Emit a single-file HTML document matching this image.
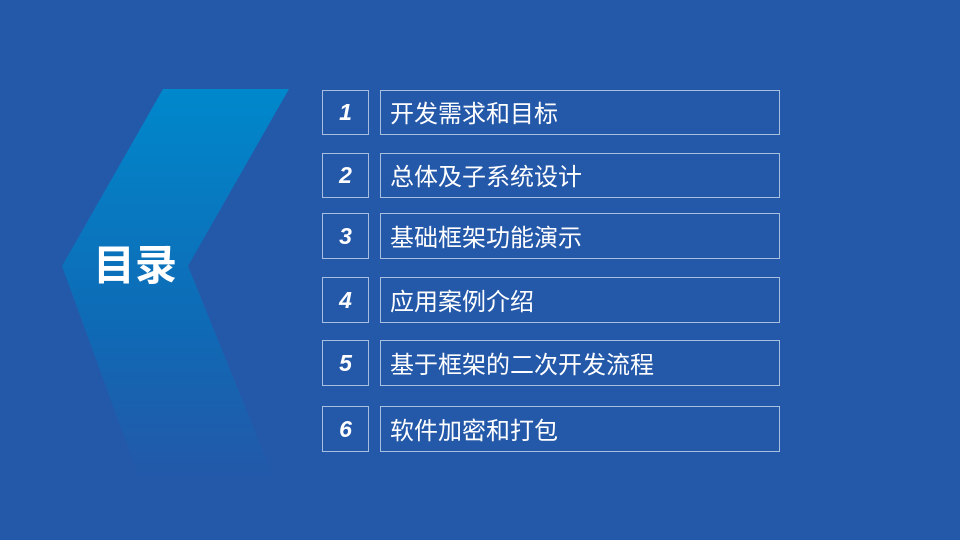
<!DOCTYPE html><html><head><meta charset="utf-8"><style>
body{margin:0;width:960px;height:540px;background:#2458a9;position:relative;overflow:hidden;font-family:"Liberation Sans","Noto Sans CJK SC",sans-serif}
.n,.t{position:absolute;border:1px solid #a9bfe0;box-sizing:border-box;color:#fff;display:flex;align-items:center}
.n{left:322px;width:47px;justify-content:center;font-style:italic;font-weight:bold;font-size:23px}
.t{left:380px;width:400px;padding-left:9px;font-size:24px;padding-bottom:2px}
</style></head><body>
<svg width="960" height="540" style="position:absolute;left:0;top:0">
<defs><linearGradient id="g" x1="0" y1="0" x2="0" y2="1"><stop offset="0" stop-color="#0088cc"/><stop offset="0.6" stop-color="#0f6ab5"/><stop offset="1" stop-color="#2458a9"/></linearGradient></defs>
<polygon points="163,89 289,89 188,266 276,483 141,483 62,266" fill="url(#g)"/>
</svg>
<div style="position:absolute;left:93px;top:236px;color:#fff;font-weight:bold;font-size:42px;font-family:'Noto Sans CJK SC',sans-serif;line-height:54px">目录</div>
<div class="n" style="top:90px;height:45px">1</div><div class="t" style="top:90px;height:45px">开发需求和目标</div>
<div class="n" style="top:153px;height:45px">2</div><div class="t" style="top:153px;height:45px">总体及子系统设计</div>
<div class="n" style="top:213px;height:46px">3</div><div class="t" style="top:213px;height:46px">基础框架功能演示</div>
<div class="n" style="top:277px;height:46px">4</div><div class="t" style="top:277px;height:46px">应用案例介绍</div>
<div class="n" style="top:340px;height:46px">5</div><div class="t" style="top:340px;height:46px">基于框架的二次开发流程</div>
<div class="n" style="top:406px;height:46px">6</div><div class="t" style="top:406px;height:46px">软件加密和打包</div>
</body></html>
